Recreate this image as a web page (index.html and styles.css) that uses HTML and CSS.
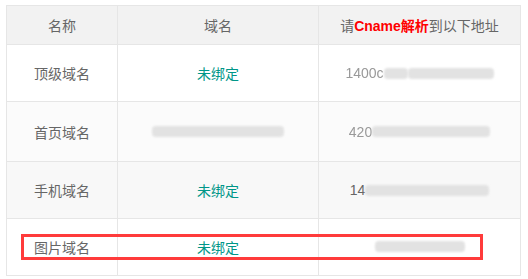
FILE: index.html
```html
<!DOCTYPE html>
<html lang="zh-CN">
<head>
    <meta charset="UTF-8" />
    <title>域名绑定</title>
    <link rel="stylesheet" href="styles.css">
</head>
<body>
    <div class="domain-wrap">
        <table class="domain-table">
            <colgroup>
                <col class="col-name">
                <col class="col-domain">
                <col class="col-cname">
            </colgroup>
            <thead>
                <tr>
                    <th>名称</th>
                    <th>域名</th>
                    <th>请<span class="hl">Cname解析</span>到以下地址</th>
                </tr>
            </thead>
            <tbody>
                <tr>
                    <td>顶级域名</td>
                    <td><span class="unbound">未绑定</span></td>
                    <td>
                        <span class="masked">
                            <span class="peek faded">1400c</span>
                            <span class="blot" style="width: 24px"></span>
                            <span class="blot" style="width: 86px"></span>
                        </span>
                    </td>
                </tr>
                <tr class="hover tall">
                    <td>首页域名</td>
                    <td>
                        <span class="masked">
                            <span class="blot" style="width: 132px"></span>
                        </span>
                    </td>
                    <td>
                        <span class="masked">
                            <span class="peek faded">420</span>
                            <span class="blot" style="width: 118px"></span>
                        </span>
                    </td>
                </tr>
                <tr class="even">
                    <td>手机域名</td>
                    <td><span class="unbound">未绑定</span></td>
                    <td>
                        <span class="masked">
                            <span class="peek">14</span>
                            <span class="blot" style="width: 124px"></span>
                        </span>
                    </td>
                </tr>
                <tr>
                    <td>图片域名</td>
                    <td><span class="unbound">未绑定</span></td>
                    <td>
                        <span class="masked">
                            <span class="blot" style="width: 90px"></span>
                        </span>
                    </td>
                </tr>
            </tbody>
        </table>
        <div class="mark-box"></div>
    </div>
</body>
</html>
```

FILE: styles.css
```css
body {
    margin: 0;
    padding: 5px 0 0 6px;
    background: #fff;
    font-family: "Liberation Sans", "Noto Sans CJK SC", sans-serif;
    font-size: 14px;
    color: #666;
}

.domain-wrap {
    position: relative;
    width: 514px;
}

.domain-table {
    width: 514px;
    border-collapse: collapse;
    table-layout: fixed;
}

.col-name { width: 111px; }
.col-domain { width: 201px; }
.col-cname { width: 202px; }

.domain-table th,
.domain-table td {
    border: 1px solid #e6e6e6;
    padding: 0 6px;
    text-align: center;
    font-weight: normal;
    white-space: nowrap;
}

.domain-table thead tr {
    height: 39px;
    background: #f2f2f2;
}

.domain-table tbody tr {
    height: 57px;
}

    .domain-table tbody tr.tall {
        height: 60px;
    }

    .domain-table tbody tr.hover {
        background: #fbfbfb;
    }

    .domain-table tbody tr.even {
        background: #f8f8f8;
    }

.hl {
    color: #ff0000;
    font-weight: bold;
}

.unbound {
    color: #009688;
}

/* blurred address placeholders */
.masked {
    display: inline-flex;
    align-items: center;
}

.peek {
    color: #666;
}

    .peek.faded {
        color: #999;
        filter: blur(0.6px);
    }

.blot {
    display: inline-block;
    height: 11px;
    background: #e2e2e2;
    border-radius: 4px;
    filter: blur(1px);
}

.mark-box {
    position: absolute;
    left: 15px;
    top: 229px;
    width: 456px;
    height: 20px;
    border: 3px solid #ff3b3b;
}
```
